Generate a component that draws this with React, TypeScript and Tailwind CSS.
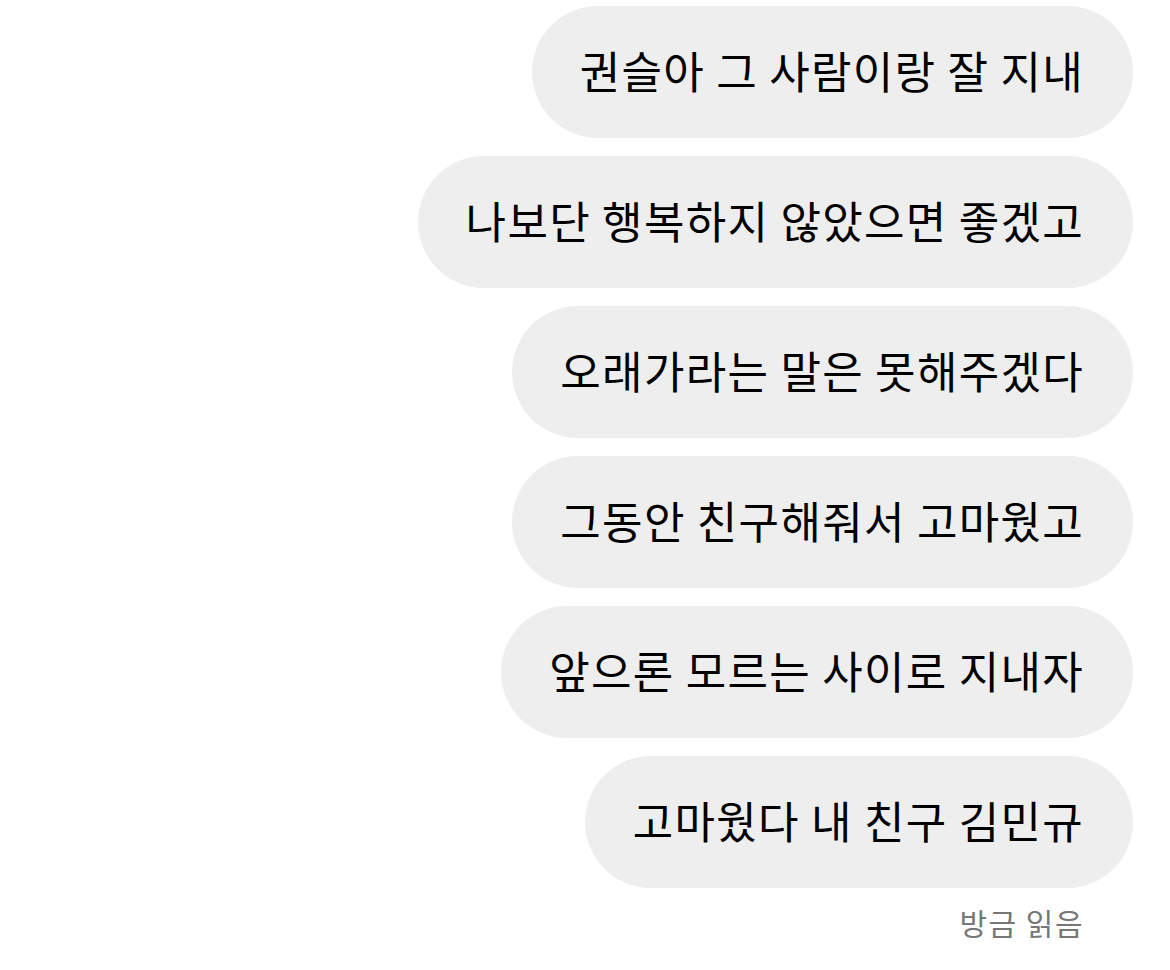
const messages = [
  "권슬아 그 사람이랑 잘 지내",
  "나보단 행복하지 않았으면 좋겠고",
  "오래가라는 말은 못해주겠다",
  "그동안 친구해줘서 고마웠고",
  "앞으론 모르는 사이로 지내자",
  "고마웠다 내 친구 김민규",
];

export default function App() {
  return (
    <main
      className="w-[1170px] h-[970px] bg-white flex flex-col items-end pt-[6px] pr-[37px] gap-[18px]"
      style={{ fontFamily: '"Noto Sans CJK KR", "Noto Sans", sans-serif' }}
    >
      {messages.map((m) => (
        <div
          key={m}
          className="h-[132px] flex items-center rounded-full bg-[#eeeeee] pl-[48px] pr-[49px] pb-[4px] text-[44px] tracking-[1.3px] text-black whitespace-nowrap"
        >
          {m}
        </div>
      ))}
      <div className="pr-[49px] -mt-[4px] text-[30px] leading-[40px] tracking-[1.5px] text-[#777777]">방금 읽음</div>
    </main>
  );
}
